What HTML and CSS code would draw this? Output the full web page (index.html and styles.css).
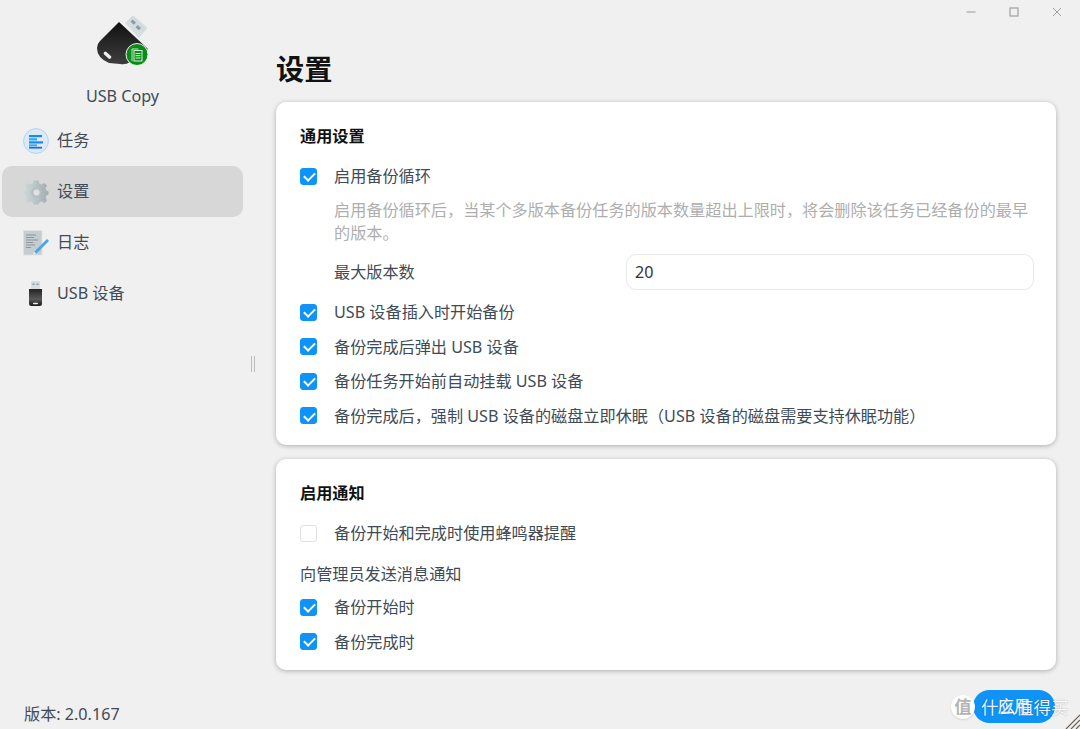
FILE: index.html
```html
<!DOCTYPE html>
<html lang="zh-CN">
<head>
<meta charset="utf-8">
<title>USB Copy</title>
<link rel="stylesheet" href="styles.css">
</head>
<body>
<div class="app">
  <aside class="sidebar">
    <div class="brand">
      <svg class="logo" viewBox="0 0 80 70" width="80" height="70">
        <defs>
          <linearGradient id="body" x1="0" y1="0" x2="0" y2="1"><stop offset="0" stop-color="#111"/><stop offset="1" stop-color="#3e3e3e"/></linearGradient>
          <linearGradient id="stick" x1="0" y1="0" x2="0" y2="1"><stop offset="0" stop-color="#222"/><stop offset=".6" stop-color="#5a5a5a"/><stop offset="1" stop-color="#1a1a1a"/></linearGradient>
        </defs>
        <path d="M45 18 L52 11 Q53 10 54 11 L66.500 22 Q67.500 23 66.500 24 L59 33 Z" fill="#d3dde0"/>
        <rect x="51" y="15.500" width="4.500" height="3.200" transform="rotate(42 53.250 17.100)" fill="#8f9ba0"/>
        <rect x="56" y="21" width="4.500" height="3.200" transform="rotate(42 58.250 22.600)" fill="#8f9ba0"/>
        <path d="M39 17 L68 44 L50 57 Q46 60 40 59 L29 58 Q17 53 17 43 Q17 39 20 36 Z" fill="url(#body)"/>
        <rect x="23" y="48.500" width="9" height="3.400" rx="1.500" transform="rotate(42 27.500 50.200)" fill="#eee"/>
        <circle cx="57" cy="49.500" r="11" fill="#0a8a16" stroke="#f0f0f0" stroke-width="1"/>
        <path d="M52 56 V44 H58.500" fill="none" stroke="#bfe8c2" stroke-width="1"/>
        <rect x="54" y="45.500" width="8" height="10.500" fill="#0a8a16" stroke="#d8f2da" stroke-width="1"/>
        <path d="M55.500 48.500 H60.500 M55.500 50.700 H60.500 M55.500 53 H60.500" stroke="#d8f2da" stroke-width="1"/>
      </svg>
      <div class="app-name">USB Copy</div>
    </div>
    <nav class="nav">
      <a class="nav-item">
        <svg class="nav-icon" viewBox="0 0 26 26" width="26" height="26">
          <circle cx="13" cy="13" r="12.400" fill="#dfe9f3" stroke="#a9d4fa" stroke-width="1"/>
          <g fill="#1689f3">
            <rect x="6" y="7" width="13" height="2.200"/>
            <rect x="6" y="10.200" width="8" height="2.200" fill="#25aef5"/>
            <rect x="6" y="13.300" width="14" height="2.200"/>
            <rect x="6" y="16.400" width="8" height="1.800" fill="#25aef5"/>
            <rect x="6" y="18.800" width="13" height="1.800" fill="#1470ee"/>
          </g>
        </svg>
        <span>任务</span>
      </a>
      <a class="nav-item active">
        <svg class="nav-icon" viewBox="0 0 26 26" width="26" height="26">
          <defs><linearGradient id="gear" x1="0" y1="0" x2="1" y2="0"><stop offset="0" stop-color="#cddad9"/><stop offset="1" stop-color="#a2adb1"/></linearGradient></defs>
          <path fill="url(#gear)" d="M10.500 1.500 H15.500 L16.200 4.400 L18.800 5.500 L21.500 4 L24 6.500 L22.500 9.200 L23.600 11.800 L25.500 12.500 V15.500 L23.600 16.200 L22.500 18.800 L24 21.500 L21.500 24 L18.800 22.500 L16.200 23.600 L15.500 25.500 H10.500 L9.800 23.600 L7.200 22.500 L4.500 24 L2 21.500 L3.500 18.800 L2.400 16.200 L0.500 15.500 V12.500 L2.400 11.800 L3.500 9.200 L2 6.500 L4.500 4 L7.200 5.500 L9.800 4.400 Z"/>
          <circle cx="13" cy="13.500" r="5" fill="#b7c1c3"/>
          <circle cx="13.500" cy="13.500" r="3" fill="#dfe2e2"/>
        </svg>
        <span>设置</span>
      </a>
      <a class="nav-item">
        <svg class="nav-icon" viewBox="0 0 26 26" width="26" height="26">
          <rect x="0.500" y="0.500" width="18.500" height="24.500" fill="#c6cdd0" stroke="#dde2e3" stroke-width="0.800"/>
          <path d="M3 5 H13 M3 7.500 H11 M3 10 H15 M3 12.500 H10 M3 15 H12 M3 17.500 H8" stroke="#8d9396" stroke-width="1"/>
          <path d="M25 10 L12 23" stroke="#4aa6ea" stroke-width="3"/>
          <path d="M10 25 L11.200 21.600 L13.400 23.800 Z" fill="#e6e6e6"/>
        </svg>
        <span>日志</span>
      </a>
      <a class="nav-item">
        <svg class="nav-icon" viewBox="0 0 26 26" width="26" height="26">
          <path d="M8 1 Q8 0 9 0 H16 Q17 0 17 1 V9 H8 Z" fill="#d7dde0"/>
          <rect x="9.500" y="2.500" width="2" height="1.500" fill="#8b9599"/>
          <rect x="13.500" y="2.500" width="2" height="1.500" fill="#8b9599"/>
          <path d="M6 8 H19 V22.500 Q19 25 16.500 25 H8.500 Q6 25 6 22.500 Z" fill="url(#stick)"/>
          <rect x="10" y="21.800" width="5" height="1.400" rx="0.700" fill="#eee"/>
        </svg>
        <span>USB 设备</span>
      </a>
    </nav>
    <div class="version">版本: 2.0.167</div>
  </aside>
  <div class="splitter"><span class="grip"></span></div>
  <main class="main">
    <div class="window-controls">
      <svg viewBox="0 0 10 10" width="10" height="10"><path d="M0.500 5 H9.500" stroke="#a8a8a8" stroke-width="1.200"/></svg>
      <svg viewBox="0 0 10 10" width="10" height="10"><rect x="1" y="1" width="8" height="8" fill="none" stroke="#a0a0a0" stroke-width="1.200"/></svg>
      <svg viewBox="0 0 10 10" width="10" height="10"><path d="M1 1 L9 9 M9 1 L1 9" stroke="#a0a0a0" stroke-width="1"/></svg>
    </div>
    <h1 class="page-title">设置</h1>
    <section class="card card-general">
      <h2 class="card-title">通用设置</h2>
      <label class="check-row"><span class="box on"></span><span>启用备份循环</span></label>
      <p class="hint">启用备份循环后，当某个多版本备份任务的版本数量超出上限时，将会删除该任务已经备份的最早的版本。</p>
      <div class="field-row">
        <span class="field-label">最大版本数</span>
        <div class="input">20</div>
      </div>
      <div class="check-group">
        <label class="check-row"><span class="box on"></span><span>USB 设备插入时开始备份</span></label>
        <label class="check-row"><span class="box on"></span><span>备份完成后弹出 USB 设备</span></label>
        <label class="check-row"><span class="box on"></span><span>备份任务开始前自动挂载 USB 设备</span></label>
        <label class="check-row"><span class="box on"></span><span>备份完成后，强制 USB 设备的磁盘立即休眠（USB 设备的磁盘需要支持休眠功能）</span></label>
      </div>
    </section>
    <section class="card card-notify">
      <h2 class="card-title">启用通知</h2>
      <label class="check-row"><span class="box"></span><span>备份开始和完成时使用蜂鸣器提醒</span></label>
      <div class="sub-title">向管理员发送消息通知</div>
      <div class="check-group tight">
        <label class="check-row"><span class="box on"></span><span>备份开始时</span></label>
        <label class="check-row"><span class="box on"></span><span>备份完成时</span></label>
      </div>
    </section>
  </main>
</div>
<div class="apply-btn">应用</div>
<div class="watermark"><span class="wm-badge">值</span><span class="wm-text">什么值得买</span></div>
<svg class="resize-corner" viewBox="0 0 16 16" width="16" height="16"><path d="M2 16 L16 2 M7 16 L16 7 M12 16 L16 12" stroke="#6b604f" stroke-width="1.200"/></svg>
</body>
</html>
```

FILE: styles.css
```css
* { box-sizing: border-box; }
html, body { margin: 0; height: 100%; }
body {
  width: 1080px;
  height: 729px;
  overflow: hidden;
  position: relative;
  background: #f0f0f0;
  color: #414b55;
  font-family: "Noto Sans", "Noto Sans CJK SC", sans-serif;
  font-size: 16.150px;
  line-height: 22px;
}
.app { display: flex; height: 729px; }
.sidebar { width: 245px; flex: none; display: flex; flex-direction: column; padding-left: 2px; }
.brand { display: flex; flex-direction: column; align-items: center; padding-top: 5px; width: 241px; }
.logo { display: block; margin-right: 5px; }
.app-name { margin-top: 10px; height: 22px; }
.nav { display: flex; flex-direction: column; margin-top: 8px; }
.nav-item { display: flex; align-items: center; width: 241px; height: 51px; border-radius: 10px; padding-left: 21px; gap: 8px; }
.nav-item span { margin-bottom: 2px; }
.nav-item.active { background: #d7d7d7; }
.nav-icon { display: block; flex: none; }
.version { margin-top: auto; margin-bottom: 4px; padding-left: 22px; height: 22px; }
.splitter { width: 31px; flex: none; display: flex; flex-direction: column; justify-content: flex-start; padding-top: 356px; padding-left: 6px; }
.grip { display: block; width: 4px; height: 16px; border-left: 1px solid #bdbdbd; border-right: 1px solid #bdbdbd; }
.main { width: 780px; flex: none; display: flex; flex-direction: column; }
.window-controls { display: flex; justify-content: flex-end; align-items: center; height: 24px; gap: 33px; margin-right: -6px; }
.page-title { margin: 27px 0 15px; font-size: 28.200px; line-height: 36px; font-weight: 700; color: #111; height: 36px; }
.card { background: #fff; border-radius: 10px; box-shadow: 0 1px 5px rgba(0,0,0,.28); padding: 23px 24px 0; }
.card-general { height: 343px; }
.card-notify { height: 211px; margin-top: 14px; }
.card-title { margin: 0 0 18px; font-size: 16.150px; line-height: 22px; font-weight: 700; color: #111; }
.check-row { display: flex; align-items: center; height: 22px; gap: 17px; }
.box { width: 17px; height: 17px; flex: none; border-radius: 3px; border: 1px solid #e0e0e0; background: #fff; position: relative; }
.box.on { background: #0f93f7; border-color: #0f93f7; }
.box.on::after { content: ""; position: absolute; left: 3px; top: 3.200px; width: 9px; height: 5px; border-left: 2.300px solid #fff; border-bottom: 2.300px solid #fff; transform: rotate(-45deg); }
.hint { margin: 11.500px 0 0 34px; color: #aeaeae; line-height: 23px; }
.field-row { display: flex; align-items: center; height: 36px; margin: 9.500px -2px 0 0; padding-left: 34px; }
.field-label { flex: none; width: 292px; }
.input { flex: none; width: 408px; height: 36px; border: 1px solid #e8e8e8; border-radius: 10px; padding: 6px 8px; color: #333; background: #fff; }
.check-group { display: flex; flex-direction: column; gap: 12.670px; margin-top: 11px; }
.check-group.tight { margin-top: 11px; }
.sub-title { margin-top: 19px; }
.apply-btn { position: absolute; left: 973px; top: 690px; width: 82px; height: 33px; border-radius: 17px; background: #0f93f7; color: #fff; text-align: center; line-height: 33px; }
.watermark { position: absolute; left: 951px; top: 695px; display: flex; align-items: center; gap: 6px; }
.wm-badge { width: 24px; height: 24px; border-radius: 50%; background: #fff; color: #b4b4b4; font-size: 17px; line-height: 24px; text-align: center; font-weight: 700; box-shadow: 0 1px 2px rgba(0,0,0,.12); }
.wm-text { color: rgba(255,255,255,.92); font-size: 17.500px; line-height: 24px; white-space: nowrap; text-shadow: 0 0 1.500px rgba(0,0,0,.35); }
.resize-corner { position: absolute; right: 0; bottom: 0; }
```
